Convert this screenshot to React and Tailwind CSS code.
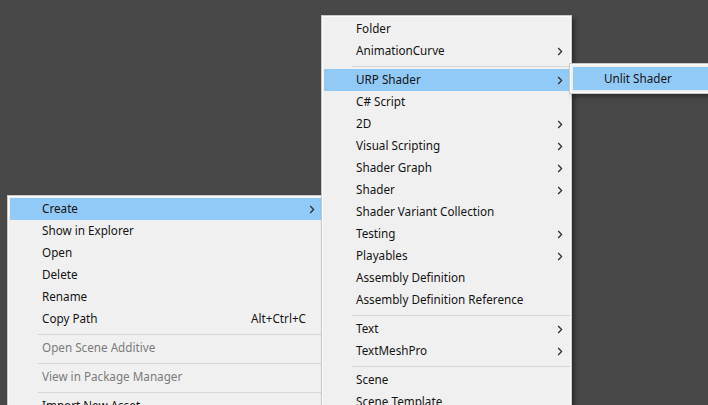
import React from 'react'

const FONT = { fontFamily: '"Noto Sans", "Noto Sans CJK KR", "Liberation Sans", sans-serif' }

function Chevron() {
  return (
    <svg width="6" height="9" viewBox="0 0 6 9" className="shrink-0">
      <path d="M1.2 1 L4.6 4.5 L1.2 8" fill="none" stroke="#303030" strokeWidth="1.3" />
    </svg>
  )
}

function Row({ label, sub, shortcut, active, disabled }) {
  return (
    <div className={`h-[22px] flex items-center pl-[32px] pr-[6px] ${active ? 'bg-[#91c9f7]' : ''}`}>
      <span className={`flex-1 text-[11.7px] leading-none whitespace-nowrap ${disabled ? 'text-[#7b7b7b]' : 'text-[#141414]'}`}>
        {label}
      </span>
      {shortcut && <span className="text-[11.7px] leading-none text-[#141414] mr-[9px]">{shortcut}</span>}
      {sub && <Chevron />}
    </div>
  )
}

function Sep() {
  return (
    <div className="h-[7px] pl-[28px] pt-[4px] -mr-[1px]">
      <div className="h-px bg-[#d6d6d6]" />
    </div>
  )
}

const createItems = [
  { label: 'Folder' },
  { label: 'AnimationCurve', sub: true },
  'sep',
  { label: 'URP Shader', sub: true, active: true },
  { label: 'C# Script' },
  { label: '2D', sub: true },
  { label: 'Visual Scripting', sub: true },
  { label: 'Shader Graph', sub: true },
  { label: 'Shader', sub: true },
  { label: 'Shader Variant Collection' },
  { label: 'Testing', sub: true },
  { label: 'Playables', sub: true },
  { label: 'Assembly Definition' },
  { label: 'Assembly Definition Reference' },
  'sep',
  { label: 'Text', sub: true },
  { label: 'TextMeshPro', sub: true },
  'sep',
  { label: 'Scene' },
  { label: 'Scene Template' },
]

const assetItems = [
  { label: 'Create', sub: true, active: true },
  { label: 'Show in Explorer' },
  { label: 'Open' },
  { label: 'Delete' },
  { label: 'Rename' },
  { label: 'Copy Path', shortcut: 'Alt+Ctrl+C' },
  'sep',
  { label: 'Open Scene Additive', disabled: true },
  'sep',
  { label: 'View in Package Manager', disabled: true },
  'sep',
  { label: 'Import New Asset...' },
]

const menuBox =
  'absolute bg-[#f0f0f0] border border-[#c9c9c9] shadow-[inset_0_0_0_1px_#fbfbfb,3px_3px_4px_rgba(0,0,0,0.35)]'

export default function App() {
  return (
    <div className="relative w-[708px] h-[405px] overflow-hidden bg-[#484848]" style={FONT}>
      {/* Project context menu */}
      <div className={`${menuBox} left-[7px] top-[195px] w-[317px] pt-[2px] px-[2px]`}>
        {assetItems.map((it, i) => (it === 'sep' ? <Sep key={i} /> : <Row key={i} {...it} />))}
      </div>

      {/* Create submenu */}
      <div className={`${menuBox} left-[321px] top-[15px] w-[251px] pt-[2px] px-[2px] z-10`}>
        {createItems.map((it, i) => (it === 'sep' ? <Sep key={i} /> : <Row key={i} {...it} />))}
      </div>

      {/* URP Shader submenu */}
      <div className={`${menuBox} left-[569px] top-[63px] w-[160px] p-[3px] z-20`}>
        <div className="h-[23px] flex items-center pl-[31px] bg-[#91c9f7]">
          <span className="text-[11.7px] leading-none text-[#141414] whitespace-nowrap">Unlit Shader</span>
        </div>
      </div>
    </div>
  )
}
